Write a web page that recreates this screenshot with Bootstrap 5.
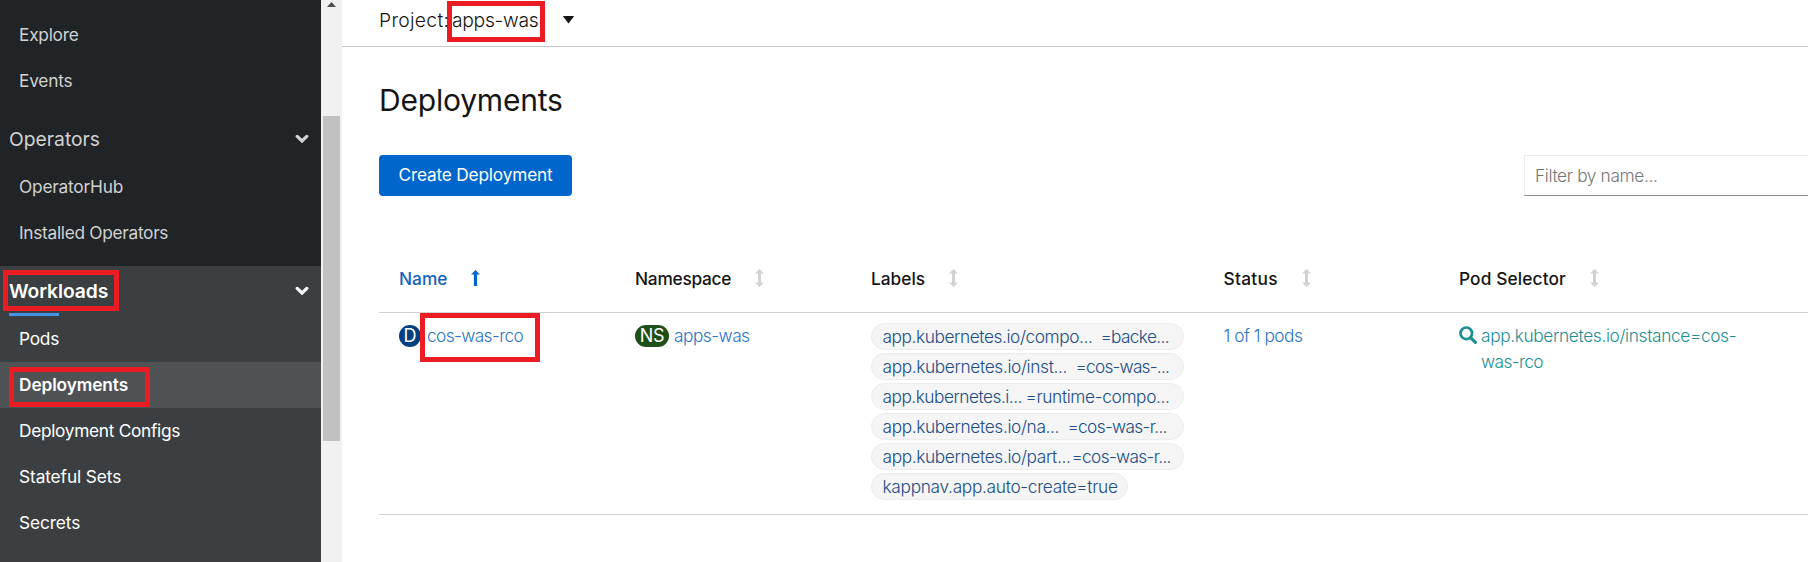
<!DOCTYPE html>
<html lang="en">
<head>
<meta charset="utf-8">
<meta name="viewport" content="width=device-width, initial-scale=1">
<title>Deployments</title>
<link href="https://cdn.jsdelivr.net/npm/bootstrap@5.3.0/dist/css/bootstrap.min.css" rel="stylesheet">
<style>
body{font-family:Inter,"Open Sans",sans-serif;font-size:17.3px;line-height:26px;color:#151515;height:562px;overflow:hidden;white-space:nowrap}
a{text-decoration:none}

/* sidebar */
.side{width:321px;padding-top:12px;background:#212427}
.side .nav-link{height:46px;padding:0 0 0 19px;display:flex;align-items:center;color:#d2d2d2}
.group-head{height:50px;padding:0 12px 0 9px;font-size:19.3px;color:#d2d2d2}
.group-ops{margin-top:10px}
.open-group{height:296px;margin-top:10px;background:#3c3f42}
.open-group .nav-link,.open-group .group-head{color:#fff}
.open-group .nav-link.active{background:#4f5255;font-weight:600}
.rule-blue{width:50px;height:3px;background:#4394e5;left:9px;top:47px}

/* scrollbar */
.scroll{width:21px;background:#f1f1f1}
.scroll-up{height:116px;padding:2px 0 0 6px;line-height:0}
.thumb{width:17px;height:325px;margin-left:2px;background:#c1c1c1}

/* highlight frames */
.frame{position:absolute;border:5px solid #ec1c24;pointer-events:none}
.frame-work{left:3px;top:4px;width:116px;height:41px}
.frame-dep{left:9px;top:5px;width:141px;height:40px}
.frame-proj{left:-5px;top:-6px;width:98px;height:41px}
.frame-name{left:41px;top:0;width:120px;height:49px}

/* main */
.topbar{height:47px;border-bottom:1px solid #c7c7c7;padding:7px 0 0 37px;font-size:19.3px;font-weight:300}
.proj-label{width:73px}
.caret-icon{margin:9px 0 0 24px}
.content{padding-left:37px}
h1{font-size:30px;line-height:40px;font-weight:400;margin:33px 0 35px}
.btn-create,.btn-create:hover{width:193px;height:41px;background:#06c;color:#fff;border:0;border-radius:4px;font-size:17.3px;padding:0 0 2px}
.filter{height:41px;width:284px;border:1px solid #ededed;border-right:0;border-bottom-color:#8a8d90;border-radius:0;color:#151515;padding:0 0 1px 10px;font-size:17.3px;font-weight:300;letter-spacing:-.36px}
.filter::placeholder{color:#757575}

/* table */
.cols{display:grid;grid-template-columns:236px 236px 352.5px 235.5px 1fr}
.cols>div{padding-left:20px;position:relative}
.head-row{height:67px;margin-top:50px;border-bottom:1px solid #d2d2d2;font-weight:500}
.head-row>div{display:flex;align-items:center}
.head-row svg{margin-left:24px;margin-top:-2px;fill:#d2d2d2}
.sorted{color:#1463c0}
.head-row .sorted svg{fill:#06c}
.body-row{height:202px;border-bottom:1px solid #d2d2d2;font-weight:300}
.body-row>div{padding-top:10px}
.body-row a{color:#2b74c7}
.kind{height:22px;line-height:22px;border-radius:11px;color:#fff;text-align:center;font-size:18px;font-weight:400;margin-top:2px}
.kind-d{width:22px;background:#004080;margin-right:6px}
.kind-ns{width:34px;background:#1e4f18;margin-right:5px;letter-spacing:-.4px}
.chip{display:flex;width:313px;height:27px;margin-bottom:3px;padding-left:10.5px;border:1px solid #ececec;border-radius:14px;background:#f5f5f5;color:#204d86}
.chip.short{width:257px}
.k1{width:218px}.k2{width:193px}.k3{width:143px}.k4{width:185px}.k5{width:189px}
.body-row a.teal{color:#1c8f92}
.teal svg{margin:3px 4px 0 0}

/* letter tracking */
.p3{letter-spacing:.3px}.p2{letter-spacing:.13px}
.t1{letter-spacing:-.1px}.t2{letter-spacing:-.2px}.t25{letter-spacing:-.25px}.t3{letter-spacing:-.3px}
.t35{letter-spacing:-.36px}.t4{letter-spacing:-.42px}.t45{letter-spacing:-.5px}.t5{letter-spacing:-.6px}.t65{letter-spacing:-.67px}.t75{letter-spacing:-.77px}
</style>
</head>
<body class="d-flex bg-white">
<svg class="d-none">
  <symbol id="sort" viewBox="0 0 9 18"><path d="M4.5 0 9 4.6H6V13.4H9L4.5 18 0 13.4H3V4.6H0z"/></symbol>
  <symbol id="chev" viewBox="0 0 14 10"><path d="M2.2 2.4 7 7 11.8 2.4" fill="none" stroke="currentColor" stroke-width="3.2" stroke-linecap="round"/></symbol>
</svg>

<nav class="side flex-shrink-0">
  <a class="nav-link" href="#"><span class="t25">Explore</span></a>
  <a class="nav-link" href="#"><span class="t2">Events</span></a>
  <div class="group-head group-ops d-flex align-items-center justify-content-between"><span>Operators</span><svg width="14" height="10"><use href="#chev"/></svg></div>
  <a class="nav-link" href="#"><span class="t2">OperatorHub</span></a>
  <a class="nav-link" href="#"><span class="t3">Installed Operators</span></a>
  <div class="open-group">
    <div class="group-head position-relative d-flex align-items-center justify-content-between fw-semibold">
      <span class="t1">Workloads</span><svg width="14" height="10"><use href="#chev"/></svg>
      <div class="rule-blue position-absolute"></div>
      <div class="frame frame-work"></div>
    </div>
    <a class="nav-link" href="#"><span class="t25">Pods</span></a>
    <a class="nav-link active position-relative" href="#"><span class="t1">Deployments</span><span class="frame frame-dep"></span></a>
    <a class="nav-link" href="#"><span class="t3">Deployment Configs</span></a>
    <a class="nav-link" href="#"><span class="t1">Stateful Sets</span></a>
    <a class="nav-link" href="#"><span class="t1">Secrets</span></a>
  </div>
</nav>

<div class="scroll flex-shrink-0">
  <div class="scroll-up"><svg width="9" height="5" viewBox="0 0 9 5"><path d="M4.5 0 9 5H0z" fill="#505050"/></svg></div>
  <div class="thumb"></div>
</div>

<main class="flex-grow-1">
  <div class="topbar d-flex align-items-start">
    <span class="proj-label p3">Project:</span>
    <span class="position-relative t3">apps-was<span class="frame frame-proj"></span></span>
    <svg class="caret-icon" width="13" height="8" viewBox="0 0 13 8"><path d="M.8 0H12.2L6.5 7.5z" fill="#151515"/></svg>
  </div>
  <div class="content">
    <h1 class="t2">Deployments</h1>
    <div class="d-flex justify-content-between">
      <button class="btn btn-create t2" type="button">Create Deployment</button>
      <input class="filter" type="text" placeholder="Filter by name...">
    </div>

    <div class="cols head-row">
      <div class="sorted"><span>Name</span><svg width="9" height="16" viewBox="0 0 9 16"><path d="M4.5 0 9 4.6H6.1V16H2.9V4.6H0z"/></svg></div>
      <div><span class="t25">Namespace</span><svg width="9" height="18"><use href="#sort"/></svg></div>
      <div><span>Labels</span><svg width="9" height="18"><use href="#sort"/></svg></div>
      <div><span class="p3">Status</span><svg width="9" height="18"><use href="#sort"/></svg></div>
      <div><span class="p2">Pod Selector</span><svg width="9" height="18"><use href="#sort"/></svg></div>
    </div>

    <div class="cols body-row">
      <div><div class="d-flex"><span class="kind kind-d">D</span><a class="t5" href="#">cos-was-rco</a></div><div class="frame frame-name"></div></div>
      <div><div class="d-flex"><span class="kind kind-ns">NS</span><a class="t45" href="#">apps-was</a></div></div>
      <div>
        <div class="chip"><span class="k1 t4">app.kubernetes.io/compo...</span><span class="t65">=backe...</span></div>
        <div class="chip"><span class="k2 t35">app.kubernetes.io/inst...</span><span class="t75">=cos-was-...</span></div>
        <div class="chip"><span class="k3 t45">app.kubernetes.i...</span><span class="t35">=runtime-compo...</span></div>
        <div class="chip"><span class="k4 t35">app.kubernetes.io/na...</span><span class="t65">=cos-was-r...</span></div>
        <div class="chip"><span class="k5 t35">app.kubernetes.io/part...</span><span class="t65">=cos-was-r...</span></div>
        <div class="chip short"><span class="t3">kappnav.app.auto-create=true</span></div>
      </div>
      <div><a class="t45" href="#">1 of 1 pods</a></div>
      <div><a class="teal d-flex" href="#"><svg class="flex-shrink-0" width="18" height="18" viewBox="0 0 18 18"><circle cx="7.3" cy="7.3" r="5.8" fill="none" stroke="currentColor" stroke-width="2.7"/><path d="M11.6 11.6 16.4 16.4" stroke="currentColor" stroke-width="3.2" stroke-linecap="round"/></svg><span class="t35">app.kubernetes.io/instance=cos-<br><span class="t5">was-rco</span></span></a></div>
    </div>
  </div>
</main>
<script src="https://cdn.jsdelivr.net/npm/bootstrap@5.3.0/dist/js/bootstrap.bundle.min.js"></script>
</body>
</html>
